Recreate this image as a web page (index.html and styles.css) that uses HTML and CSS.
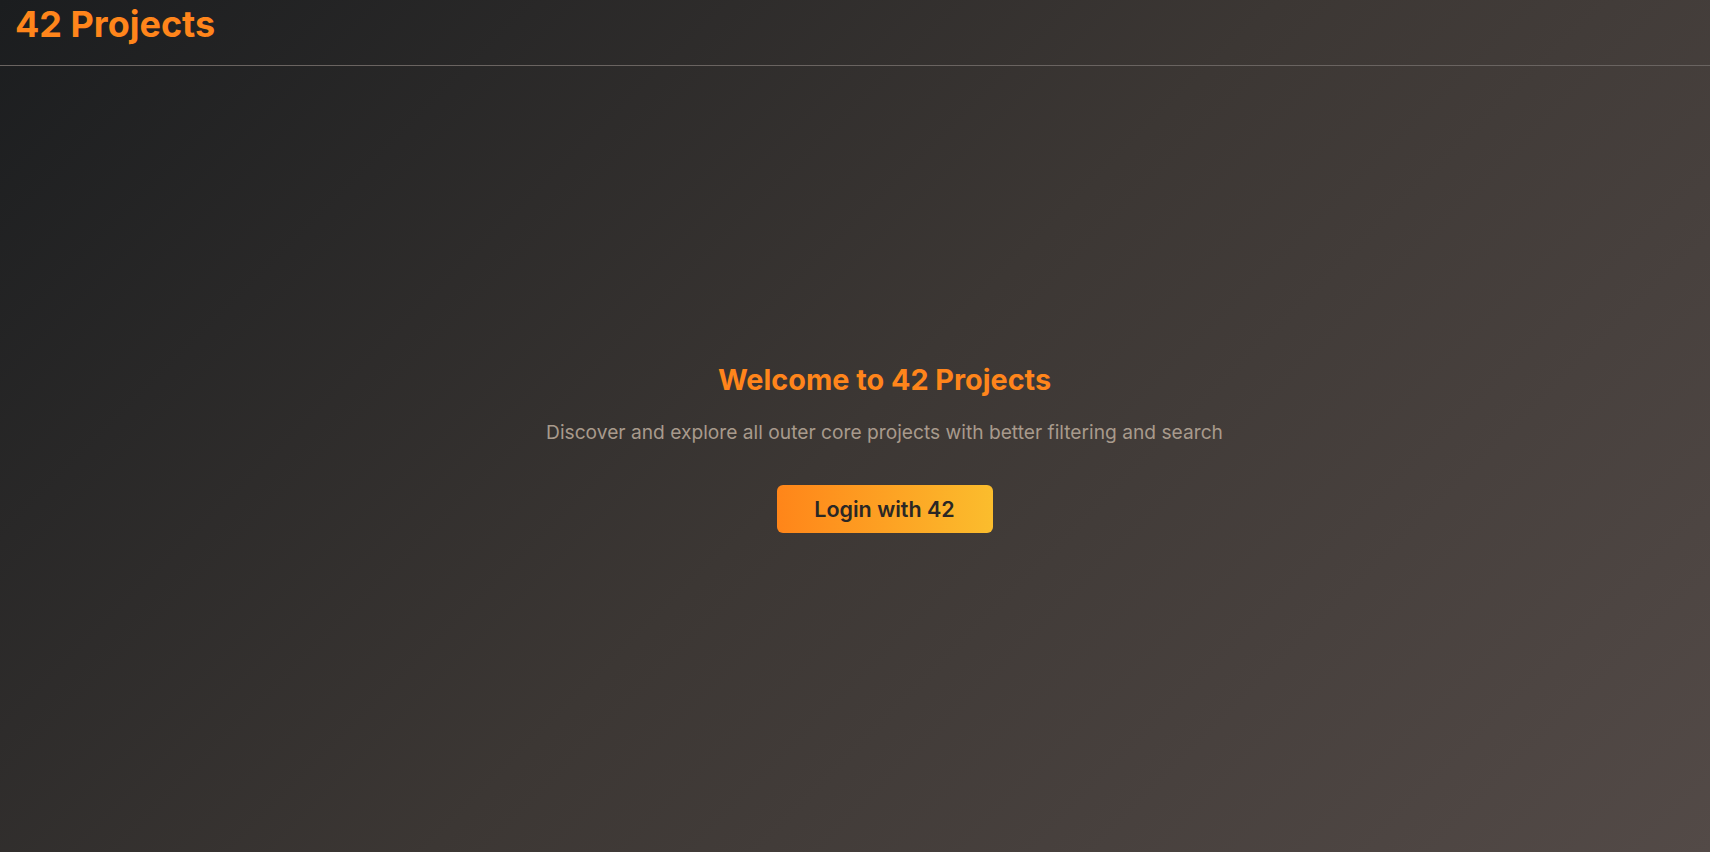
FILE: index.html
```html
<!DOCTYPE html>
<html lang="en">
<head>
<meta charset="utf-8">
<title>42 Projects</title>
<link rel="stylesheet" href="styles.css">
</head>
<body>
<div class="page">
  <header class="topbar">
    <h1 class="brand">42 Projects</h1>
  </header>
  <main class="hero">
    <h2 class="hero-title">Welcome to 42 Projects</h2>
    <p class="hero-sub">Discover and explore all outer core projects with better filtering and search</p>
    <button class="login-btn" type="button">Login with 42</button>
  </main>
</div>
</body>
</html>
```

FILE: styles.css
```css
* { box-sizing: border-box; }
html, body { margin: 0; padding: 0; height: 100%; }
body {
  font-family: Inter, "Noto Sans", "Liberation Sans", sans-serif;
  background: linear-gradient(135deg, #1b1d1f 0%, #3c3734 50%, #534a47 100%);
  color: #e8e2dc;
  overflow: hidden;
}
.page {
  height: 852px;
  display: flex;
  flex-direction: column;
}
.topbar {
  height: 66px;
  padding: 2px 15px 0;
  border-bottom: 1px solid #6a6461;
}
.brand {
  margin: 0;
  font-size: 36px;
  line-height: 44px;
  font-weight: 700;
  color: #ff851b;
}
.hero {
  flex: 1;
  display: flex;
  flex-direction: column;
  align-items: center;
  padding-top: 296px;
  padding-left: 59px;
}
.hero-title {
  margin: 0;
  font-size: 28.8px;
  line-height: 36px;
  font-weight: 700;
  color: #ff851b;
}
.hero-sub {
  margin: 20px 0 0;
  font-size: 19.2px;
  line-height: 28px;
  color: #a89a8c;
}
.login-btn {
  margin-top: 39px;
  width: 216px;
  height: 48px;
  border: none;
  border-radius: 6px;
  background: linear-gradient(90deg, #ff8519 0%, #fbbd2d 100%);
  color: #2a2725;
  font-family: Inter, "Noto Sans", "Liberation Sans", sans-serif;
  font-size: 21.5px;
  font-weight: 600;
  cursor: pointer;
}
```
